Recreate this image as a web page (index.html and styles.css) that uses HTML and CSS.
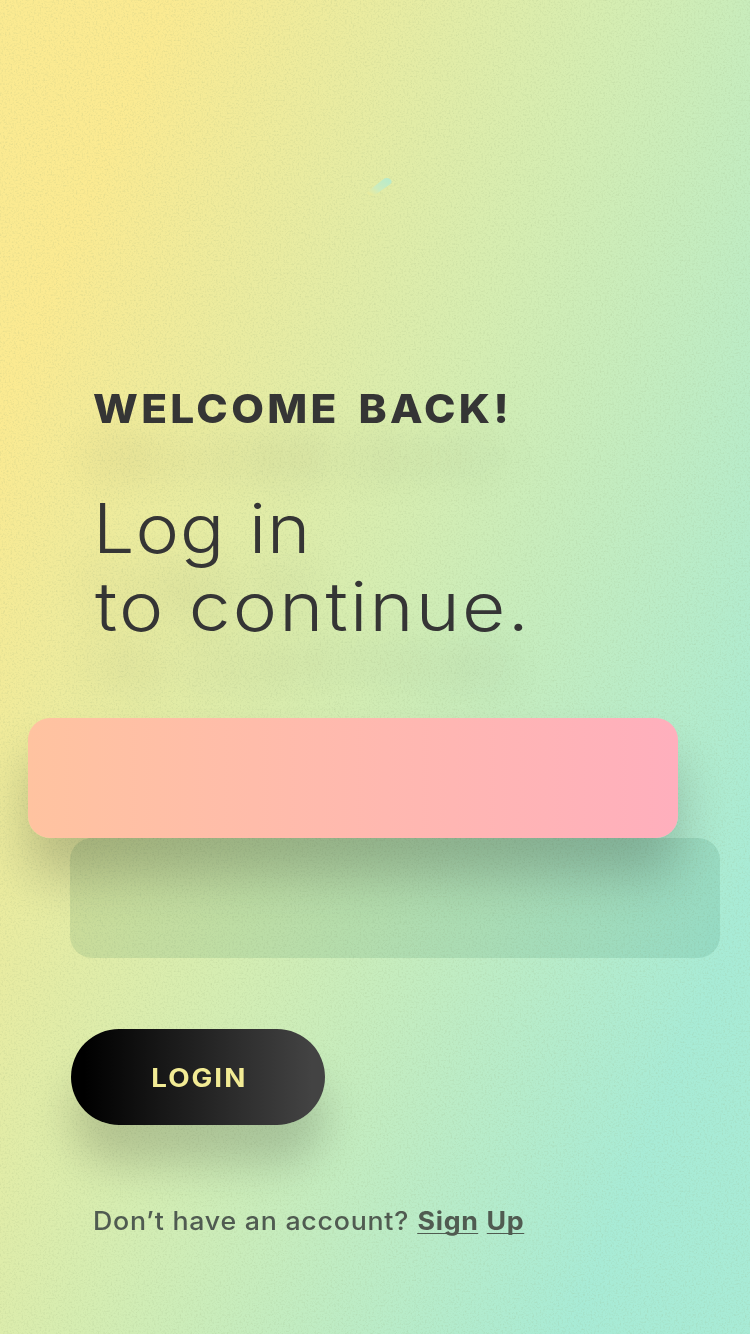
FILE: index.html
```html
<!DOCTYPE html>
<html lang="en">
<head>
<meta charset="utf-8">
<title>Log in</title>
<link rel="stylesheet" href="styles.css">
</head>
<body>
<main class="screen">
  <svg class="grain" width="750" height="1334" aria-hidden="true">
    <filter id="grain" x="0" y="0" width="100%" height="100%">
      <feTurbulence type="fractalNoise" baseFrequency="0.55" numOctaves="2" seed="4"/>
      <feColorMatrix values="0 0 0 0 0.3  0 0 0 0 0.4  0 0 0 0 0.2  1.6 0 0 0 -0.75"/>
    </filter>
    <rect width="750" height="1334" filter="url(#grain)"/>
  </svg>
  <svg class="logo" width="30" height="24" viewBox="0 0 30 24" aria-hidden="true">
    <defs><linearGradient id="mark" x1="0" y1="1" x2="1" y2="0">
      <stop offset="0.1" stop-color="#e8eb9f"/><stop offset="0.4" stop-color="#cdecbd"/><stop offset="1" stop-color="#b5ebcd"/>
    </linearGradient></defs>
    <path d="M2.5 22.5Q0 21 3 18.5L17 7.5Q20.5 5 24 7Q27 9.5 24.5 12L11 21.5Q6 25 2.5 22.5Z" fill="url(#mark)"/>
  </svg>
  <h1 class="welcome">WELCOME BACK!</h1>
  <p class="headline"><span class="line line-one">Log in</span><span class="line line-two">to continue.</span></p>
  <form class="form">
    <div class="field field-active"></div>
    <div class="field field-idle"></div>
    <button class="login" type="button"><span class="login-label">LOGIN</span></button>
  </form>
  <p class="signup"><span class="ask">Don’t have an account?</span><a class="link"><span>Sign</span><span>Up</span></a></p>
</main>
</body>
</html>
```
FILE: styles.css
```css
* { box-sizing: border-box; }
body { margin: 0; }
.screen {
  position: relative;
  isolation: isolate;
  display: flex;
  flex-direction: column;
  align-items: flex-start;
  width: 750px;
  height: 1334px;
  overflow: hidden;
  background: linear-gradient(112deg, #fbea91 13%, #d5edb2 48%, #a8ebd6 86%);
  color: #353535;
  font-family: Inter, "Open Sans", sans-serif;
}
.grain { position: absolute; inset: 0; z-index: -1; opacity: .3; }
.logo { display: block; margin: 172px 0 0 366px; }
.welcome {
  margin: 184px 0 0 92.5px;
  font-size: 40px;
  line-height: 58px;
  font-weight: 800;
  letter-spacing: 3.1px;
  word-spacing: 6px;
  white-space: nowrap;
  text-shadow: 0 50px 46px rgba(0, 0, 0, .16);
  transform: scaleX(1.06);
  transform-origin: left;
}
.headline {
  margin: 51px 0 0 95px;
  font-size: 68px;
  line-height: 78px;
  font-weight: 300;
  white-space: nowrap;
  text-shadow: 0 54px 48px rgba(0, 0, 0, .22);
}
.line { display: block; transform-origin: left; }
.line-one { letter-spacing: .9px; word-spacing: 2px; margin-left: -2px; transform: scaleX(1.08); }
.line-two { letter-spacing: 2px; transform: scaleX(1.1); }
.form { display: flex; flex-direction: column; align-items: flex-start; margin-top: 73px; }
.field { width: 650px; height: 120px; border-radius: 22px; }
.field-active {
  z-index: 1;
  margin-left: 28px;
  background: linear-gradient(90deg, #ffc3a0, #ffafbd);
  box-shadow: 0 38px 50px rgba(0, 0, 0, .2);
}
.field-idle { margin-left: 70px; background: rgba(0, 90, 60, .11); }
.login {
  width: 254px;
  height: 96px;
  margin: 71px 0 0 70.5px;
  padding: 2px 0 0 4px;
  border: 0;
  border-radius: 48px;
  background: linear-gradient(90deg, #000 5%, #434343 95%);
  box-shadow: 0 40px 42px rgba(0, 0, 0, .17);
  color: #f2eb94;
  font: 700 25px Inter, sans-serif;
  letter-spacing: 1.8px;
}
.login-label { display: inline-block; transform: scaleX(1.11); }
.signup {
  display: flex;
  gap: 8px;
  margin: 77px 0 0 92.5px;
  color: #505b51;
  font-size: 25px;
  line-height: 38px;
  font-weight: 500;
  white-space: nowrap;
  transform: scaleX(1.07);
  transform-origin: left;
}
.ask { letter-spacing: .7px; }
.link { display: flex; gap: 7.5px; font-weight: 700; letter-spacing: .6px; }
.link span {
  height: 32px;
  border-bottom: 1px solid #505b51;
}
```
